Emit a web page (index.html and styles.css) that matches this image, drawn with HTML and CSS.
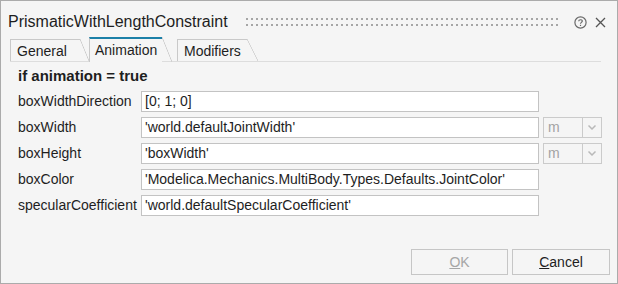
FILE: index.html
```html
<!DOCTYPE html>
<html lang="en">
<head>
    <meta charset="UTF-8">
    <title>PrismaticWithLengthConstraint</title>
    <link rel="stylesheet" href="styles.css">
</head>
<body>

    <!-- parameter dialog -->
    <div class="dialog">
        <div class="titlebar">
            <span class="title">PrismaticWithLengthConstraint</span>
            <div class="grip"></div>
            <svg class="help" width="13" height="13" viewBox="0 0 13 13">
                <circle cx="6.5" cy="6.5" r="5.6" fill="none" stroke="#6a6a6a" stroke-width="1.2"/>
                <path d="M4.7 5.2 C4.7 3.3 8.3 3.3 8.3 5.1 C8.3 6.4 6.5 6.4 6.5 7.8" fill="none" stroke="#6a6a6a" stroke-width="1.2"/>
                <rect x="5.9" y="8.8" width="1.2" height="1.2" fill="#6a6a6a"/>
            </svg>
            <svg class="close" width="11" height="11" viewBox="0 0 11 11">
                <path d="M1 1 L10 10 M10 1 L1 10" stroke="#555" stroke-width="1.3"/>
            </svg>
        </div>

        <div class="tabs">
            <div class="tab tab-general">General</div>
            <div class="tab tab-active">Animation</div>
            <div class="tab tab-modifiers">Modifiers</div>
        </div>

        <div class="pane">
            <div class="group-title">if animation = true</div>
            <div class="params">
                <label>boxWidthDirection</label>
                <div class="field">[0; 1; 0]</div>
                <div></div>

                <label>boxWidth</label>
                <div class="field">'world.defaultJointWidth'</div>
                <div class="unit">
                    <div class="unit-value">m</div>
                    <div class="unit-arrow">
                        <svg width="8" height="5" viewBox="0 0 8 5"><path d="M0.5 0.5 L4 4 L7.5 0.5" fill="none" stroke="#b9b9b9" stroke-width="1.5"/></svg>
                    </div>
                </div>

                <label>boxHeight</label>
                <div class="field">'boxWidth'</div>
                <div class="unit">
                    <div class="unit-value">m</div>
                    <div class="unit-arrow">
                        <svg width="8" height="5" viewBox="0 0 8 5"><path d="M0.5 0.5 L4 4 L7.5 0.5" fill="none" stroke="#b9b9b9" stroke-width="1.5"/></svg>
                    </div>
                </div>

                <label>boxColor</label>
                <div class="field">'Modelica.Mechanics.MultiBody.Types.Defaults.JointColor'</div>
                <div></div>

                <label>specularCoefficient</label>
                <div class="field">'world.defaultSpecularCoefficient'</div>
                <div></div>
            </div>
        </div>

        <div class="footer">
            <button class="btn btn-ok" disabled><u>O</u>K</button>
            <button class="btn btn-cancel"><u>C</u>ancel</button>
        </div>
    </div>

</body>
</html>
```

FILE: styles.css
```css
/* reset */
* {
    margin: 0;
    padding: 0;
    box-sizing: border-box;
    font-family: 'Liberation Sans', Arial, sans-serif;
}

body {
    background: #f5f5f5;
}

.dialog {
    width: 618px;
    height: 284px;
    border: 1px solid #ababab;
    background: #f5f5f5;
    display: flex;
    flex-direction: column;
}

/* title bar */
.titlebar {
    display: flex;
    align-items: flex-start;
    height: 36px;
    padding: 12px 11px 0 7px;
}

.title {
    font-size: 16px;
    line-height: 18px;
    color: #1e1e1e;
}

.grip {
    flex: 1;
    height: 10px;
    margin: 5px 14px 0 18px;
    background-image: radial-gradient(circle at 1px 1px, #a6a6a6 0.9px, transparent 1.1px);
    background-size: 5px 6px;
}

.help {
    margin-top: 3px;
}

.close {
    margin: 4px 0 0 8px;
}

/* tabs */
.tabs {
    display: flex;
    align-items: flex-end;
    height: 25px;
    margin: 0 16px 0 9px;
    border-bottom: 1px solid #dddddd;
}

.tab {
    position: relative;
    height: 22px;
    padding: 3px 0 0 6px;
    font-size: 14px;
    line-height: 16px;
    color: #1e1e1e;
    border-top: 1px solid #c9c9c9;
    border-left: 1px solid #c9c9c9;
}

.tab::after {
    content: "";
    position: absolute;
    top: -1px;
    bottom: 0;
    right: -9px;
    width: 9px;
    background: linear-gradient(to top right, transparent calc(50% - 0.7px), #c9c9c9 50%, transparent calc(50% + 0.7px));
}

.tab-general {
    width: 70px;
    margin-right: 9px;
}

.tab-active {
    width: 73px;
    height: 25px;
    margin-right: 15px;
    margin-bottom: -1px;
    padding-left: 5px;
    border-top: 2px solid #1c80a8;
    background: #f5f5f5;
}

.tab-active::after {
    top: -2px;
    right: -10px;
    width: 10px;
}

.tab-modifiers {
    width: 70px;
}

.tab-modifiers::after {
    right: -11px;
    width: 11px;
}

/* parameters */
.pane {
    padding: 5px 0 0 17px;
}

.group-title {
    font-size: 15px;
    font-weight: bold;
    line-height: 18px;
    color: #1e1e1e;
    margin-bottom: 6px;
}

.params {
    display: grid;
    grid-template-columns: 123px 398px auto;
    row-gap: 5px;
    align-items: center;
}

.params label {
    font-size: 14px;
    line-height: 21px;
    color: #1e1e1e;
    white-space: nowrap;
}

.field {
    height: 21px;
    border: 1px solid #c3c3c3;
    background: #fff;
    padding-left: 3px;
    font-size: 14px;
    line-height: 19px;
    color: #1e1e1e;
    white-space: nowrap;
    overflow: hidden;
}

.unit {
    display: flex;
    margin-left: 4px;
}

.unit-value {
    width: 40px;
    height: 21px;
    border: 1px solid #cbcbcb;
    padding-left: 4px;
    font-size: 14px;
    line-height: 19px;
    color: #a3a3a3;
}

.unit-arrow {
    width: 20px;
    height: 21px;
    margin-left: -1px;
    border: 1px solid #cbcbcb;
    display: flex;
    justify-content: center;
    align-items: center;
}

/* buttons */
.footer {
    margin-top: auto;
    display: flex;
    justify-content: flex-end;
    gap: 4px;
    padding: 0 7px 8px 0;
}

.btn {
    width: 97px;
    height: 26px;
    border: 1px solid #c6c6c6;
    background: #f5f5f5;
    font-size: 14px;
    color: #1e1e1e;
}

.btn-ok {
    color: #a6a6a6;
}

.btn-cancel {
    width: 98px;
}
```
